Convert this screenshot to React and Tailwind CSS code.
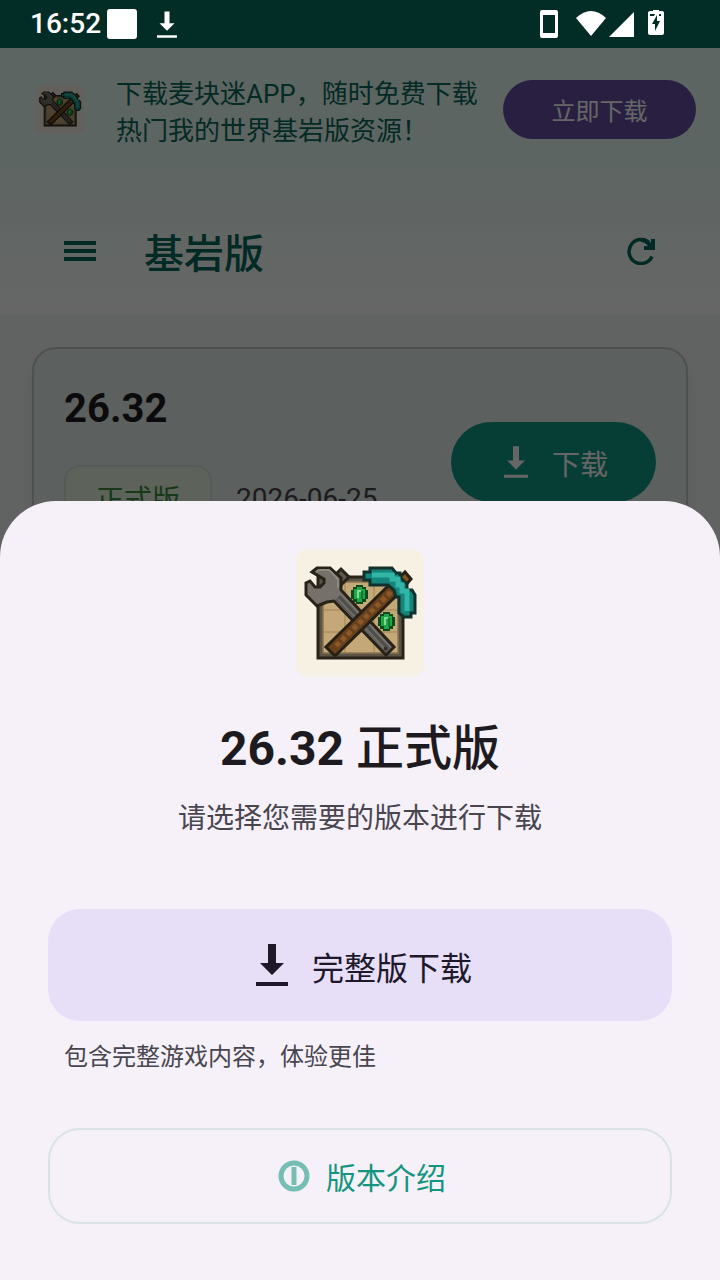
const font = "font-['Roboto','Noto_Sans_CJK_SC',sans-serif]";

function DownloadIcon({ className }) {
  return (
    <svg viewBox="0 0 32 42" className={className} fill="currentColor" aria-hidden="true">
      <path d="M12 0h8v19h8L16 31 4 19h8zM0 38h32v4H0z" />
    </svg>
  );
}

function Emerald({ x, y }) {
  return (
    <g transform={`translate(${x} ${y})`}>
      <path d="M5 0h7v2h3v3h2v9h-2v3h-3v2H5v-2H2v-3H0V5h2V2h3z" fill="#0d4a1d" />
      <path d="M6 2h5v2h3v10h-3v3H6v-3H3V4h3z" fill="#1ea548" />
      <path d="M6 5h4v2H8v6H6z" fill="#7fdc90" />
      <path d="M10 6h2v8h-2z" fill="#14792f" />
    </g>
  );
}

function AppLogo({ className }) {
  return (
    <svg viewBox="0 0 128 128" className={className} aria-hidden="true">
      <rect width="128" height="128" rx="12" fill="#f7f1e4" />
      {/* crate */}
      <path d="M22 28h85v81H22z" fill="#5b5346" stroke="#282318" strokeWidth="3" />
      <path d="M27 33h75v71H27z" fill="#c4a878" />
      <path d="M27 61h75M27 83h75M49 33v71M78 33v71" fill="none" stroke="#ad9060" strokeWidth="1.5" />
      <path d="M27 33h75v71H27z" fill="none" stroke="#8b7450" strokeWidth="1.5" />
      {/* wrench */}
      <path d="M38 27l7-7 8 8-8 8z" fill="#5d5850" stroke="#282318" strokeWidth="3" />
      <path
        d="M16 23l5-4h13l11 10v12l53 57-8 8-52-54-7 1-10 4-11-11V34l4-2 5 6h5l4-4v-4z"
        fill="#757069"
        stroke="#282318"
        strokeWidth="3"
      />
      <path d="M20 23l3-2h10l9 9v9" fill="none" stroke="#8b8882" strokeWidth="2" />
      <path d="M44 46l50 53-4 4-50-52z" fill="#4f4e4d" />
      <path d="M42 50l47 50" stroke="#6f6c68" strokeWidth="2" />
      <path d="M88 98h3v3h-3z" fill="#34322f" />
      {/* pickaxe */}
      <path d="M103 29l6-6 6 7-6 7z" fill="#875423" stroke="#282014" strokeWidth="3" />
      <path d="M94 35l9 9-64 63-9-9z" fill="#68401c" stroke="#282014" strokeWidth="3" />
      <path d="M95 43L38 99" stroke="#8b5929" strokeWidth="5" strokeDasharray="5 3" />
      <path
        d="M68 23h6v-4h22l4 5h4v4l7 7v6h5l3 5v18h-4v4h-7l-5-4V48h-3l-2-7-6-5H74v-5h-6z"
        fill="#14857b"
        stroke="#12312d"
        strokeWidth="3"
      />
      <path d="M76 26h20v4h6v6h4v6h5v20" fill="none" stroke="#32b5a5" strokeWidth="5" />
      <Emerald x={55} y={36} />
      <Emerald x={82} y={63} />
    </svg>
  );
}

function StatusBar() {
  return (
    <div className="relative z-20 flex h-12 items-center bg-[#022c26] pl-[30px] pr-[54px] text-white">
      <span className="text-[28px] font-medium leading-8">16:52</span>
      <span className="ml-1.5 size-[30px] rounded-[3px] bg-white" />
      <DownloadIcon className="ml-5 h-[27px] w-5" />
      <svg viewBox="0 0 126 30" className="ml-auto h-[30px] w-[126px]" fill="currentColor" aria-hidden="true">
        <path
          fillRule="evenodd"
          d="M2 1h14a2 2 0 0 1 2 2v24a2 2 0 0 1-2 2H2a2 2 0 0 1-2-2V3a2 2 0 0 1 2-2zm1 5v18h12V6z"
        />
        <path d="M36 9Q51-5 66 9L51 27z" />
        <path d="M94 3v25H69z" />
        <path
          fillRule="evenodd"
          d="M110 2h3V1h6v1h3a2 2 0 0 1 2 2v20a2 2 0 0 1-2 2h-12a2 2 0 0 1-2-2V4a2 2 0 0 1 2-2zm0 3v2h4l1-2zm7 1l-5 9h3v7l5-10h-3zm2-1v2h2V5z"
        />
      </svg>
    </div>
  );
}

function PromoBanner() {
  return (
    <section className="flex items-center px-6 pb-9 pt-5">
      <AppLogo className="ml-3 size-12 shrink-0" />
      <p className="ml-8 min-w-0 flex-1 pt-2 text-[26px] leading-[37px] text-[#08695a]">
        下载麦块迷APP，随时免费下载
        <br />
        热门我的世界基岩版资源！
      </p>
      <button className="h-[59px] w-[193px] shrink-0 rounded-full bg-[#6750a4] pt-1.5 text-2xl text-white">
        立即下载
      </button>
    </section>
  );
}

function TopBar() {
  return (
    <header className="flex h-[129px] items-center px-16">
      <button aria-label="菜单" className="text-[#05695b]">
        <svg viewBox="0 0 32 20" className="h-5 w-8" fill="currentColor">
          <path d="M0 0h32v4H0zM0 8h32v4H0zM0 16h32v4H0z" />
        </svg>
      </button>
      <h1 className="ml-12 pt-2 text-[40px] font-medium leading-[48px] text-[#05695b]">基岩版</h1>
      <button aria-label="刷新" className="ml-auto text-[#05695b]">
        <svg viewBox="0 0 29 28" className="h-7 w-[29px]" fill="none" stroke="currentColor">
          <path d="M25 19.500A12 12 0 1 1 22 5.500" strokeWidth="3.5" />
          <path d="M14 1q6 0 10 5V2h4v11H17V9h4q-3-4-7-4z" fill="currentColor" stroke="none" />
        </svg>
      </button>
    </header>
  );
}

function VersionCard() {
  return (
    <article className="flex items-center justify-between rounded-3xl border-2 border-[#c4cbc7] bg-[#e6f0eb] px-[30px] pb-12 pt-8 shadow-lg">
      <div>
        <h2 className="text-[40px] font-bold leading-[56px] text-[#1d1b20]">26.32</h2>
        <div className="mt-7 flex items-center gap-6">
          <span className="rounded-2xl border-2 border-[#d8e4db] bg-[#e8f5e3] px-[30px] pb-1 pt-3 text-[28px] leading-[44px] text-[#388e3c]">
            正式版
          </span>
          <time className="pt-1 text-[28px] leading-8 text-[#49454f]">2026-06-25</time>
        </div>
      </div>
      <button className="mt-3.5 flex h-20 items-center gap-6 rounded-full bg-[#0f9b87] pl-[53px] pr-12 text-[28px] text-white">
        <DownloadIcon className="h-8 w-6" />
        <span className="pt-2">下载</span>
      </button>
    </article>
  );
}

function DownloadSheet() {
  return (
    <div
      role="dialog"
      aria-labelledby="sheet-title"
      className="fixed inset-x-0 bottom-0 z-20 flex flex-col items-stretch rounded-t-[56px] bg-[#f6f1f9] px-12 pb-14 pt-12"
    >
      <AppLogo className="size-32 self-center" />
      <h2 id="sheet-title" className="mt-10 text-center text-5xl font-bold leading-[64px] text-[#1d1b20]">
        26.32 <span className="font-medium">正式版</span>
      </h2>
      <p className="mt-[18px] text-center text-[28px] leading-10 text-[#49454f]">请选择您需要的版本进行下载</p>
      <button className="mt-[70px] flex h-28 items-center justify-center gap-6 rounded-[32px] bg-[#e7def8] pl-2 text-[32px] text-[#1d192b]">
        <DownloadIcon className="h-[42px] w-8" />
        <span className="pt-2">完整版下载</span>
      </button>
      <p className="mt-4 px-4 text-2xl leading-10 text-[#49454f]">包含完整游戏内容，体验更佳</p>
      <button className="mt-[51px] flex h-24 items-center justify-center gap-4 rounded-[32px] border-2 border-[#d9e3e7] pl-1 text-[30px] text-[#14957f]">
        <svg viewBox="0 0 32 32" className="size-8" fill="none" stroke="#76bdb3" strokeWidth="5" aria-hidden="true">
          <circle cx="16" cy="16" r="13" />
          <path d="M16 7v18" />
        </svg>
        <span className="pt-1">版本介绍</span>
      </button>
    </div>
  );
}

export default function App() {
  return (
    <div className={`${font} min-h-screen overflow-hidden bg-[#f3f5f4]`}>
      <StatusBar />
      <div className="bg-linear-to-b from-[#e8fcf5] from-40% to-white">
        <PromoBanner />
        <TopBar />
      </div>
      <main className="px-8 pt-8">
        <VersionCard />
      </main>
      <div className="fixed inset-0 z-10 bg-black/60" />
      <DownloadSheet />
    </div>
  );
}
